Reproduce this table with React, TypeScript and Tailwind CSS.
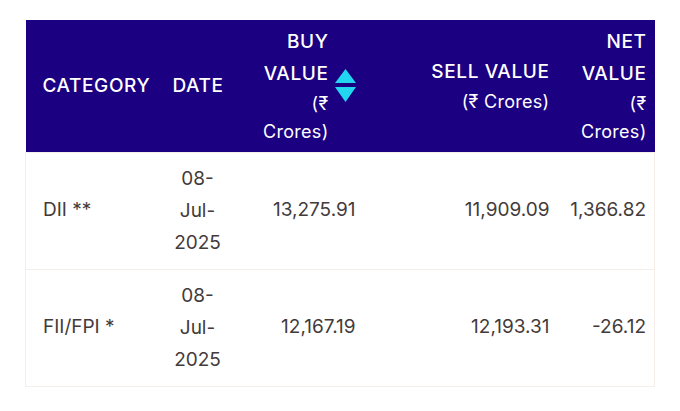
import React from "react";

interface FlowRow {
  category: string;
  date: string[];
  buy: string;
  sell: string;
  net: string;
}

const rows: FlowRow[] = [
  { category: "DII **", date: ["08-", "Jul-", "2025"], buy: "13,275.91", sell: "11,909.09", net: "1,366.82" },
  { category: "FII/FPI *", date: ["08-", "Jul-", "2025"], buy: "12,167.19", sell: "12,193.31", net: "-26.12" },
];

const SortIcon: React.FC = () => (
  <svg width="21" height="33" viewBox="0 0 21 33" className="shrink-0">
    <polygon points="10.5,0 21,14 0,14" fill="#22d6ef" />
    <polygon points="0,18 21,18 10.5,33" fill="#22d6ef" />
  </svg>
);

const Title: React.FC<{ lines: string[] }> = ({ lines }) => (
  <>
    {lines.map((l) => (
      <div key={l} className="leading-[32px] text-[19px] font-medium tracking-[0.6px]">
        {l}
      </div>
    ))}
  </>
);

const Sub: React.FC<{ lines: string[] }> = ({ lines }) => (
  <>
    {lines.map((l) => (
      <div key={l} className="leading-[28px] text-[18px] font-normal tracking-[0.3px]">
        {l}
      </div>
    ))}
  </>
);

export default function App() {
  return (
    <div
      className="w-[680px] h-[411px] bg-white pl-[25px] pt-[20px]"
      style={{ fontFamily: '"Inter", "Noto Sans", sans-serif' }}
    >
      <table className="table-fixed border-collapse w-[629px]">
        <colgroup>
          <col className="w-[138px]" />
          <col className="w-[68px]" />
          <col className="w-[134px]" />
          <col className="w-[194px]" />
          <col className="w-[95px]" />
        </colgroup>
        <thead>
          <tr className="bg-[#1b0082] text-white h-[132px]">
            <th className="pl-[17px] text-left align-middle">
              <Title lines={["CATEGORY"]} />
            </th>
            <th className="px-[9px] text-left align-middle">
              <Title lines={["DATE"]} />
            </th>
            <th className="pr-[10px] align-middle">
              <div className="flex items-center justify-end gap-[6px]">
                <div className="w-[76px] text-right">
                  <Title lines={["BUY", "VALUE"]} />
                  <Sub lines={["(₹", "Crores)"]} />
                </div>
                <SortIcon />
              </div>
            </th>
            <th className="pr-[10px] text-right align-middle">
              <Title lines={["SELL VALUE"]} />
              <Sub lines={["(₹ Crores)"]} />
            </th>
            <th className="pr-[8px] text-right align-middle">
              <Title lines={["NET", "VALUE"]} />
              <Sub lines={["(₹", "Crores)"]} />
            </th>
          </tr>
        </thead>
        <tbody className="text-[19px] text-[#433b3a]">
          {rows.map((r) => (
            <tr key={r.category} className="border border-[#f6eee8]">
              <td className="pl-[17px] py-[10px] align-middle">{r.category}</td>
              <td className="px-[9px] py-[10px] text-center align-middle">
                {r.date.map((d) => (
                  <div key={d} className="leading-[32px]">
                    {d}
                  </div>
                ))}
              </td>
              <td className="pr-[10px] text-right align-middle">{r.buy}</td>
              <td className="pr-[10px] text-right align-middle">{r.sell}</td>
              <td className="pr-[8px] text-right align-middle">{r.net}</td>
            </tr>
          ))}
        </tbody>
      </table>
    </div>
  );
}
